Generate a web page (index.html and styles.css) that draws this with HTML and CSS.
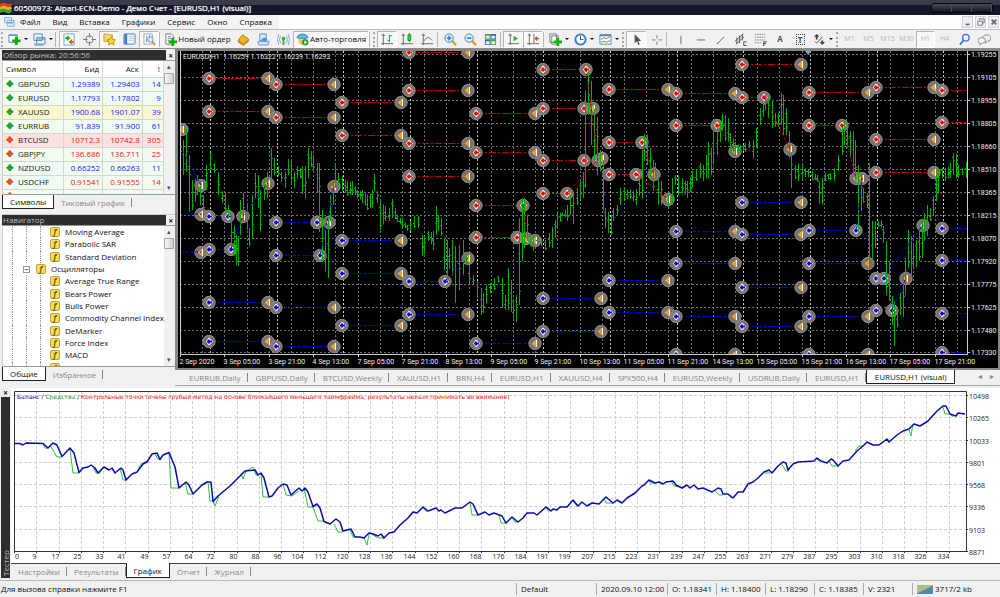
FILE: index.html
```html
<!DOCTYPE html>
<html lang="ru">
<head>
    <meta charset="UTF-8">
    <meta name="viewport" content="width=device-width, initial-scale=1.0">
    <title>60500973: Alpari-ECN-Demo - Демо Счет - [EURUSD,H1 (visual)]</title>
    <link rel="stylesheet" href="styles.css">
</head>
<body>
    <header class="titlebar">
        <svg class="logo" viewBox="0 0 12 12"><path d="M0 4q3-3 6-1t5-1" stroke="#e33d22"/><path d="M0 7q3-3 6-1t5-1" stroke="#e8b21c"/><path d="M0 10q3-3 6-1t5-1" stroke="#35a52f"/></svg>
        <h1>60500973: Alpari-ECN-Demo - Демо Счет - [EURUSD,H1 (visual)]</h1>
        <div class="frame-buttons"><button aria-label="Свернуть"></button><button aria-label="Развернуть"></button><button aria-label="Закрыть"></button></div>
    </header>

    <nav class="menubar">
        <div class="menu">
            <svg class="icon" viewBox="0 0 14 14"><path d="M2 2h8v6H2zM5 5h8v7H5z" fill="#e4f1fc" stroke="#6fa5d8"/><path d="M6 9l2-2 2 2 2-2" fill="none" stroke="#4b8ac9"/></svg>
            <a href="#">Файл</a><a href="#">Вид</a><a href="#">Вставка</a><a href="#">Графики</a><a href="#">Сервис</a><a href="#">Окно</a><a href="#">Справка</a>
        </div>
        <div class="mdi-buttons"><button aria-label="Свернуть окно"><svg viewBox="0 0 10 10"><path d="M2 8h5" /></svg></button><button aria-label="Восстановить окно"><svg viewBox="0 0 10 10"><path class="thin" d="M3 3V1h6v5H7M1 4h6v5H1z"/></svg></button><button aria-label="Закрыть окно"><svg viewBox="0 0 10 10"><path d="M2 2l6 6M8 2L2 8"/></svg></button></div>
    </nav>

    <div class="toolbar">
        <span class="grip"></span>
        <button class="tool drop" aria-label="Новый график"><svg viewBox="0 0 14 14"><path d="M1 2h9v8H1z" fill="#fff" stroke="#4d88b5"/><path d="M1 2.500h9" stroke="#4d88b5"/><path d="M9 4v9M4.500 8.500h9" stroke="#12a512" stroke-width="3"/></svg></button>
        <button class="tool drop" aria-label="Профили"><svg viewBox="0 0 14 14"><path d="M1 1h9v7H1zM4 5h9v7H4z" fill="#e8f3fb" stroke="#4d88b5"/><path d="M4 6.500h9M2 11v2h9" fill="none" stroke="#4d88b5"/></svg></button>
        <span class="sep wide"></span>
        <button class="tool on" aria-label="Обзор рынка"><svg viewBox="0 0 14 14"><path d="M1 1h11v12H1z" fill="#fff" stroke="#6ba2d2"/><path d="M5 3v5M2.500 5.500h5" stroke="#18a818" stroke-width="2"/><path d="M9 7v5M6.500 9.500h5" stroke="#e0532a" stroke-width="2"/></svg></button>
        <button class="tool" aria-label="Окно данных"><svg viewBox="0 0 14 14"><circle cx="7" cy="7" r="4" fill="none" stroke="#777"/><path d="M7 0v5M7 9v5M0 7h5M9 7h5" stroke="#777"/></svg></button>
        <button class="tool on" aria-label="Навигатор"><svg viewBox="0 0 14 14"><path d="M1 3V1h4l1 1h4v7H1z" fill="#f6db74" stroke="#c19a2b"/><path d="M9 4l1.500 3 3 .3-2.200 2.200.6 3.500L9 11.300 6 13l.6-3.500L4.500 7.300l3-.3z" fill="#ffd92e" stroke="#b98b12"/></svg></button>
        <button class="tool" aria-label="Терминал"><svg viewBox="0 0 14 14"><rect x="1" y="1" width="12" height="11" rx="1" fill="#eef6fd" stroke="#3f7fc0"/><path d="M3 1v11" stroke="#3f7fc0" stroke-width="3"/><path d="M6 4h6M6 6h6M6 8h6" stroke="#b8d2e8"/></svg></button>
        <button class="tool on" aria-label="Тестер стратегий"><svg viewBox="0 0 14 14"><path d="M1 1h9v11H1z" fill="#f5fafd" stroke="#8ab0cc"/><path d="M4 3v7M7 2v7" stroke="#6f8fa5"/><circle cx="8" cy="7" r="3" fill="#d7ecfb" fill-opacity=".8" stroke="#5f95bf"/><path d="M10 9l3 4" stroke="#c99a2e" stroke-width="2"/></svg></button>
        <span class="sep"></span>
        <button class="tool order"><svg viewBox="0 0 14 14"><path d="M2 1h6l2 2v9H2z" fill="#fff" stroke="#777"/><path d="M4 4h4M4 6h4M4 8h2" stroke="#888"/><path d="M9.500 5v9M5 9.500h9" stroke="#12a512" stroke-width="3"/></svg>Новый ордер</button>
        <button class="tool" aria-label="MetaEditor"><svg viewBox="0 0 14 14"><path d="M1 8l5-6 7 5-6 5z" fill="#f0b429" stroke="#a87414"/><path d="M1 8v2l6 4 6-5V7l-6 5z" fill="#c48a1c"/></svg></button>
        <button class="tool" aria-label="Сигналы"><svg viewBox="0 0 14 14"><path d="M3 1h7v7H3z" fill="#d7ebfb" stroke="#4a8fd8"/><path d="M5 8q0-3 3-3t3 3z" fill="#4a8fd8"/><path d="M1 9h12l-1 4H2z" fill="#cfe3f5" stroke="#6199cd"/></svg></button>
        <button class="tool" aria-label="Рынок"><svg viewBox="0 0 14 14"><path d="M4 3q-3 4 0 8M10 3q3 4 0 8M2 1q-3 6 0 12M12 1q3 6 0 12" fill="none" stroke="#7fabc4"/><circle cx="7" cy="6" r="2" fill="#3fae46"/><path d="M7 7v6" stroke="#3fae46" stroke-width="2"/></svg></button>
        <button class="tool on auto"><svg viewBox="0 0 14 14"><path d="M1 5q1-4 6-4t6 4q-6 3-12 0z" fill="#6bb5de" stroke="#3384b4"/><path d="M2 6q5 3 9 0l-1 5-4 2-3-2z" fill="#f2ca52"/><circle cx="10" cy="10" r="3.500" fill="#21a637"/><path d="M9 8v4l3-2z" fill="#fff"/></svg>Авто-торговля</button>
        <span class="sep"></span><span class="grip"></span>
        <button class="tool on" aria-label="Бары"><svg viewBox="0 0 14 14"><path d="M2.500 1v12M0 11.500h13M1 3l1.500-2L4 3" fill="none" stroke="#666"/><path d="M9 2v8M7 8h2M9 3h3" stroke="#18932a" fill="none"/></svg></button>
        <button class="tool" aria-label="Свечи"><svg viewBox="0 0 14 14"><path d="M2.500 1v12M0 11.500h13M1 3l1.500-2L4 3" fill="none" stroke="#666"/><path d="M9 0v10" stroke="#18932a"/><path d="M7.500 2h3v6h-3z" fill="#3dd34a" stroke="#18932a"/></svg></button>
        <button class="tool" aria-label="Линия"><svg viewBox="0 0 14 14"><path d="M2.500 1v12M0 11.500h13M1 3l1.500-2L4 3" fill="none" stroke="#666"/><path d="M3 9q4-8 9-1" fill="none" stroke="#2fa34a"/></svg></button>
        <span class="sep"></span>
        <button class="tool" aria-label="Увеличить"><svg viewBox="0 0 14 14"><path d="M8.500 8.500l4.500 4.500" stroke="#d4a72a" stroke-width="2.500"/><circle cx="5.500" cy="5.500" r="4.500" fill="#dff0fc" stroke="#3c85c4"/><path d="M3 5.500h5M5.500 3v5" stroke="#2b6db0" stroke-width="1.500"/></svg></button>
        <button class="tool" aria-label="Уменьшить"><svg viewBox="0 0 14 14"><path d="M8.500 8.500l4.500 4.500" stroke="#d4a72a" stroke-width="2.500"/><circle cx="5.500" cy="5.500" r="4.500" fill="#dff0fc" stroke="#3c85c4"/><path d="M3 5.500h5" stroke="#2b6db0" stroke-width="1.500"/></svg></button>
        <button class="tool" aria-label="Окна мозаикой"><svg viewBox="0 0 14 14"><path d="M1 1h6v6H1zM7 7h6v6H7z" fill="#4aa83a"/><path d="M7 1h6v6H7zM1 7h6v6H1z" fill="#3569b8"/><path d="M2 3h4v3H2zM8 3h4v3H8zM2 9h4v3H2zM8 9h4v3H8z" fill="#e7f1f4"/></svg></button>
        <span class="sep"></span>
        <button class="tool on" aria-label="Автопрокрутка"><svg viewBox="0 0 14 14"><path d="M3.500 1v12M1 11.500h12M2 3l1.500-2L5 3" fill="none" stroke="#666"/><path d="M7 3v6l5-3z" fill="#2fae3f"/></svg></button>
        <button class="tool on" aria-label="Сдвиг графика"><svg viewBox="0 0 14 14"><path d="M2.500 1v12M0 11.500h13M1 3l1.500-2L4 3M7.500 1v10" fill="none" stroke="#666"/><path d="M13 6H9M11 4L9 6l2 2" fill="none" stroke="#c9512a" stroke-width="1.500"/></svg></button>
        <span class="sep"></span>
        <button class="tool drop" aria-label="Индикаторы"><svg viewBox="0 0 14 14"><path d="M1 1h7v9H1zM3 3h7v9H3z" fill="#fff" stroke="#777"/><path d="M9.500 5v9M5 9.500h9" stroke="#12b512" stroke-width="3"/></svg></button>
        <button class="tool drop" aria-label="Периоды"><svg viewBox="0 0 14 14"><circle cx="7" cy="7" r="5.500" fill="#fff" stroke="#2f7cc9" stroke-width="2"/><path d="M7 3v4h3" fill="none" stroke="#444"/></svg></button>
        <button class="tool drop" aria-label="Шаблоны"><svg viewBox="0 0 14 14"><path d="M1 2h12v10H1z" fill="#fff" stroke="#4d88c0"/><path d="M1 2.500h12" stroke="#4d88c0" stroke-width="2"/><path d="M2 7l3-2 3 1 4-2" fill="none" stroke="#c6533b"/><path d="M2 10l3-1 3 1 4-2" fill="none" stroke="#3d9a48"/></svg></button>
        <span class="grip"></span>
        <button class="tool on" aria-label="Курсор"><svg viewBox="0 0 14 14"><path d="M5 1v10l2.500-2 1.500 4 1.500-.7L9 8.500h3z" fill="#555"/></svg></button>
        <button class="tool" aria-label="Перекрестие"><svg viewBox="0 0 14 14"><path d="M7.500 2v4M7.500 9v4M2 7.500h4M9 7.500h4" stroke="#777"/></svg></button>
        <span class="sep wide"></span>
        <button class="tool" aria-label="Вертикальная линия"><svg viewBox="0 0 14 14"><path d="M7.500 3v9" stroke="#666"/></svg></button>
        <button class="tool" aria-label="Горизонтальная линия"><svg viewBox="0 0 14 14"><path d="M3 7.500h9" stroke="#666"/></svg></button>
        <button class="tool" aria-label="Трендовая линия"><svg viewBox="0 0 14 14"><path d="M3 12l8-8" stroke="#666"/></svg></button>
        <button class="tool" aria-label="Канал"><svg viewBox="0 0 14 14"><path d="M1 9l9-8M2 12l9-8M3 5v7M6 3v8M9 1v7" stroke="#555"/><path d="M13.500 9.500h-3v4h3" fill="none" stroke="#444"/></svg></button>
        <button class="tool" aria-label="Фибоначчи"><svg viewBox="0 0 14 14"><path d="M1 1.500h11M1 4.500h11M1 7.500h11M1 10.500h7" stroke="#777" stroke-dasharray="1.500 1"/><path d="M10.500 14V9.500H14M10 11.500h3" fill="none" stroke="#444"/></svg></button>
        <button class="tool letter" aria-label="Текст">A</button>
        <button class="tool letter" aria-label="Метка"><span class="boxed">T</span></button>
        <button class="tool drop arrows" aria-label="Стрелки"><svg viewBox="0 0 14 14"><path d="M1 4l3-3 3 3H5v3H3V4zM7 10l3 3 3-3h-2V8H9v2z" fill="#444"/><path d="M2 9l2 2 6-7" stroke="#555" fill="none"/></svg></button>
        <span class="grip"></span>
        <button class="tool tf">M1</button><button class="tool tf">M5</button><button class="tool tf">M15</button><button class="tool tf">M30</button><button class="tool tf on">H1</button><button class="tool tf">H4</button>
        <button class="tool" aria-label="Поиск"><svg viewBox="0 0 14 14"><circle cx="8.500" cy="5" r="3.500" fill="#eaf3ff" stroke="#3d74d9" stroke-width="1.500"/><path d="M6 8l-4 4.500" stroke="#3d74d9" stroke-width="2"/></svg></button>
        <button class="tool" aria-label="Чат"><svg viewBox="0 0 14 14"><path d="M5 6q0-4 4.500-4T14 5.500 10 9L8 11V9Q5 9 5 6z" fill="#eee" stroke="#888"/><path d="M0 8q0-3 4-3t4 3-4 3l-2 2v-2q-2 0-2-3z" fill="#f7f7f7" stroke="#888"/></svg></button>
    </div>

    <main class="workspace">
        <aside class="side">
            <section class="panel market">
                <div class="caption"><h2>Обзор рынка: 20:56:56</h2><button aria-label="Закрыть">×</button></div>
                <div class="pane">
                    <div class="scroll-area">
                        <table class="quotes">
                            <thead><tr><th>Символ</th><th>Бид</th><th>Аск</th><th>!</th></tr></thead>
                            <tbody>
                                <tr class="up"><td>GBPUSD</td><td>1.29389</td><td>1.29403</td><td>14</td></tr>
                                <tr class="up"><td>EURUSD</td><td>1.17793</td><td>1.17802</td><td>9</td></tr>
                                <tr class="up gold"><td>XAUUSD</td><td>1900.68</td><td>1901.07</td><td>39</td></tr>
                                <tr class="up"><td>EURRUB</td><td>91.839</td><td>91.900</td><td>61</td></tr>
                                <tr class="down rose"><td>BTCUSD</td><td>10712.3</td><td>10742.8</td><td>305</td></tr>
                                <tr class="down"><td>GBPJPY</td><td>136.686</td><td>136.711</td><td>25</td></tr>
                                <tr class="up"><td>NZDUSD</td><td>0.66252</td><td>0.66263</td><td>11</td></tr>
                                <tr class="down"><td>USDCHF</td><td>0.91541</td><td>0.91555</td><td>14</td></tr>
                                <tr class="down"><td>USDJPY</td><td>105.641</td><td>105.645</td><td>4</td></tr>
                            </tbody>
                        </table>
                    </div>
                    <div class="scrollbar"><span>▴</span><i></i><span>▾</span></div>
                </div>
                <div class="tabs"><button class="active">Символы</button><button>Тиковый график</button></div>
            </section>

            <section class="panel navigator">
                <div class="caption"><h2>Навигатор</h2><button aria-label="Закрыть">×</button></div>
                <div class="pane">
                    <div class="scroll-area">
                        <ul class="tree">
                            <li><i></i><i></i><i></i><b>ƒ</b>Moving Average</li>
                            <li><i></i><i></i><i></i><b>ƒ</b>Parabolic SAR</li>
                            <li><i></i><i></i><i></i><b>ƒ</b>Standard Deviation</li>
                            <li class="branch"><i></i><button aria-label="Свернуть ветку">−</button><b>ƒ</b>Осцилляторы</li>
                            <li><i></i><i></i><i></i><b>ƒ</b>Average True Range</li>
                            <li><i></i><i></i><i></i><b>ƒ</b>Bears Power</li>
                            <li><i></i><i></i><i></i><b>ƒ</b>Bulls Power</li>
                            <li><i></i><i></i><i></i><b>ƒ</b>Commodity Channel Index</li>
                            <li><i></i><i></i><i></i><b>ƒ</b>DeMarker</li>
                            <li><i></i><i></i><i></i><b>ƒ</b>Force Index</li>
                            <li><i></i><i></i><i></i><b>ƒ</b>MACD</li>
                            <li><i></i><i></i><i></i><b>ƒ</b>Momentum</li>
                        </ul>
                    </div>
                    <div class="scrollbar"><span>▴</span><i></i><span>▾</span></div>
                </div>
                <div class="tabs"><button class="active">Общие</button><button>Избранное</button></div>
            </section>
        </aside>

        <section class="chart-column">
            <div class="chart-frame"><svg id="price-chart" class="chart" viewBox="178 51 820 317" preserveAspectRatio="xMinYMin meet"></svg></div>
            <div class="tabs chart-tabs">
                <button>EURRUB,Daily</button><button>GBPUSD,Daily</button><button>BTCUSD,Weekly</button><button>XAUUSD,H1</button><button>BRN,H4</button><button>EURUSD,H1</button><button>XAUUSD,H4</button><button>SPX500,H4</button><button>EURUSD,Weekly</button><button>USDRUB,Daily</button><button>EURUSD,H1</button><button class="active">EURUSD,H1 (visual)</button>
                <span class="tab-scroll"><span>◂</span><span>▸</span></span>
            </div>
        </section>
    </main>

    <section class="tester">
        <div class="tester-caption"><button aria-label="Закрыть">×</button><h2>Тестер</h2></div>
        <div class="tester-body">
            <div class="result"><svg id="balance-chart" class="chart" viewBox="11 388 989 175" preserveAspectRatio="xMinYMin meet"></svg></div>
            <div class="tabs"><button>Настройки</button><button>Результаты</button><button class="active">График</button><button>Отчет</button><button>Журнал</button></div>
        </div>
    </section>

    <footer class="statusbar">
        <span class="help">Для вызова справки нажмите F1</span>
        <span class="profile">Default</span>
        <span class="date">2020.09.10 12:00</span>
        <span>O: 1.18341</span><span>H: 1.18400</span><span>L: 1.18290</span><span>C: 1.18385</span><span>V: 2321</span>
        <span class="traffic"><svg viewBox="0 0 16 10"><path d="M1 9V1M3 8V1M5 7V1M7 6V1M9 5V1M11 4V1M13 3V1M15 2V1" stroke="#6d8b1e"/><path d="M1 10V9M3 10V8M5 10V7M7 10V6M9 10V5M11 10V4M13 10V3M15 10V2" stroke="#1f6a8c" stroke-width="1.500"/></svg>3717/2 kb</span>
    </footer>

    <script src="charts.js"></script>
</body>
</html>
```
FILE: styles.css
```css
* { box-sizing: border-box; }
body {
    margin: 0;
    height: 100vh;
    display: grid;
    grid-template-columns: minmax(0, 1fr);
    grid-template-rows: 15px 14px 20px minmax(0, 337fr) minmax(0, 195fr) 16px;
    overflow: hidden;
    background: #f0f0f0;
    color: #111;
    font: 8px/12px "Open Sans", "Noto Sans", sans-serif;
}
h1, h2 { margin: 0; font: inherit; }
button { margin: 0; padding: 0; border: 0; background: none; color: inherit; font: inherit; white-space: nowrap; }
a { color: inherit; text-decoration: none; }
svg { display: block; }

/* window title and menu */
.titlebar {
    display: flex;
    align-items: center;
    background: linear-gradient(#3b3b49 5px, #14162a 5px);
    color: #fff;
}
.titlebar h1 { flex: 1; padding-left: 2px; text-shadow: 0 0 1px #fff; }
.logo { width: 12px; height: 12px; fill: none; stroke-width: 3; }
.frame-buttons { display: flex; margin-right: 7px; border: 1px solid #05060e; border-radius: 3px; background: linear-gradient(#4a4b5a, #11131f); }
.frame-buttons button { width: 20px; height: 8px; border-right: 1px solid #4a4b5a; }
.menubar { display: flex; justify-content: space-between; background: #fff; }
.menu { display: flex; align-items: center; gap: 12px; padding: 0 7px 0 3px; background: #f3f3f3; }
.menu .icon { width: 12px; height: 12px; margin-right: -7px; }
.mdi-buttons { display: flex; gap: 2px; align-items: center; padding-right: 1px; }
.mdi-buttons button { width: 11px; height: 12px; padding: 1px; border: 1px solid #ccd2da; background: #eef0f3; }
.mdi-buttons svg { width: 8px; height: 8px; fill: none; stroke: #666; stroke-width: 2; }
.mdi-buttons .thin { stroke-width: 1; }

/* toolbar */
.toolbar { display: flex; align-items: center; border-top: 1px solid #b9b9b9; border-bottom: 1px solid #8c8c8c; background: #f1f1f1; overflow: hidden; }
.tool { display: flex; align-items: center; justify-content: center; flex: none; width: 20px; height: 17px; }
.tool svg { width: 13px; height: 13px; flex: none; }
.tool.on { border: 1px solid #b4b4b4; border-right-color: #fff; border-bottom-color: #fff; background: #f8f8f8; }
.tool.drop { width: 25px; gap: 3px; }
.tool.drop::after { content: ""; border: 2px solid transparent; border-top: 2px solid #111; margin-top: 2px; }
.tool.order { width: 71px; gap: 1px; }
.tool.auto { width: 76px; gap: 1px; }
.tool.letter { color: #555; font-weight: bold; }
.tool.tf { width: 19px; color: #b3b3b3; font-size: 7px; }
.boxed { width: 9px; border: 1px dotted #444; line-height: 9px; }
.sep { flex: none; width: 3px; height: 15px; border-left: 1px solid #b5b5b5; }
.sep.wide { width: 4px; }
.grip { flex: none; width: 3px; height: 15px; margin: 0 1px; border-left: 2px dotted #aaa; }

/* left panels */
.workspace { display: grid; grid-template-columns: 175px minmax(0, 1fr); grid-template-rows: minmax(0, 1fr); }
.side { display: grid; grid-template-rows: minmax(0, 164fr) minmax(0, 172fr); padding: 1px 1px 0 2px; }
.panel { display: flex; flex-direction: column; min-height: 0; }
.market { padding-bottom: 4px; }
.navigator { padding-bottom: 4px; border-top: 1px solid #ccc; }
.caption { display: flex; flex: none; height: 10px; line-height: 9px; }
.caption h2 { flex: 1; padding-left: 1px; background: #2e2e2e; color: #bdbdbd; }
.caption button { width: 10px; font-weight: bold; }
.pane { display: flex; flex: 1; min-height: 0; border: 1px solid #999; border-left-color: #ccc; background: #fff; }
.scroll-area { flex: 1; min-width: 0; overflow: hidden; }
.scrollbar { display: flex; flex-direction: column; align-items: center; width: 11px; background: #f0f0f0; color: #555; font-size: 7px; }
.scrollbar i { width: 10px; height: 11px; flex: none; border: 1px solid #a5a5a5; border-radius: 1px; background: linear-gradient(90deg, #f7f7f7, #cfcfcf); }
.scrollbar span:last-child { margin-top: auto; }
.quotes { width: 100%; border-collapse: collapse; table-layout: fixed; }
.quotes th { height: 16px; padding: 0 3px; border-right: 1px solid #ddd; font-weight: normal; text-align: right; }
.quotes th:first-child { width: 60px; text-align: left; }
.quotes th:nth-child(4) { width: 21px; }
.quotes td { height: 14px; padding: 0 2px; border: 1px solid #d5d5d5; border-left: 0; background: #effcef; text-align: right; line-height: 12px; }
.quotes td:first-child { text-align: left; color: #222; }
.quotes td:first-child::before { content: "✥"; display: inline-block; width: 12px; padding-left: 1px; font-size: 9px; font-weight: bold; }
.up { color: #1a1aff; }
.down { color: #f31616; }
.up td:first-child::before { color: #109a2a; }
.down td:first-child::before { color: #d94a1c; }
.gold td { background: #f9f8cf; }
.rose td { background: #ffe0df; }

/* navigator tree */
.tree { display: flex; flex-direction: column; height: calc(100% + 8px); margin: 0; padding: 0; list-style: none; }
.tree li { display: flex; align-items: center; flex: 1; min-height: 0; white-space: nowrap; }
.tree i { align-self: stretch; flex: none; width: 14px; border-right: 1px dotted #999; }
.tree i:first-child { width: 10px; }
.tree b { flex: none; width: 10px; height: 10px; margin-right: 5px; border: 1px solid #c3a031; border-radius: 2px; background: #f8dc5d; color: #755800; line-height: 8px; text-align: center; font-style: italic; }
.tree i + b { margin-left: 9px; }
.tree button { width: 7px; height: 7px; margin: 0 6px 0 10px; border: 1px solid #999; background: #fff; line-height: 4px; }

/* tab strips */
.tabs { display: flex; flex: none; height: 15px; color: #888; }
.tabs button { position: relative; padding: 0 7px; line-height: 13px; }
.tabs button:not(.active)::after { content: ""; position: absolute; right: 0; top: 3px; height: 9px; border-right: 1px solid #888; }
.tabs .active { height: 14px; border: 1px solid #222; border-top: 0; background: #fff; color: #111; }

/* price chart */
.chart-column { display: flex; flex-direction: column; min-height: 0; }
.chart-frame { flex: 1; min-height: 0; border: solid #858885; border-width: 2px 2px 2px 3px; background: #000; }
.chart { width: 100%; height: 100%; }
.chart-tabs { height: 16px; padding-left: 6px; border-bottom: 1px solid #aaa; }
.chart-tabs button { padding: 0 7px 0 8px; line-height: 14px; }
.tab-scroll { display: flex; gap: 8px; margin-left: auto; padding-right: 6px; }
.grid { fill: none; stroke: #66727e; stroke-dasharray: 2 2; }
.day { fill: none; stroke: #ccc; stroke-dasharray: 2 2; }
.frame { fill: none; stroke: #ccc; }
.axis-text { fill: #eee; font-family: Roboto, sans-serif; font-size: 7px; }
.bars { fill: none; stroke: #00b000; }
.sell { fill: none; stroke: #c40000; stroke-dasharray: 7 2 2 2; }
.buy { fill: none; stroke: #0000d6; stroke-dasharray: 7 2 2 2; }
.link { stroke-dasharray: 3 2; }
.halo { fill: #8d7c70; fill-opacity: 0.9; stroke: #8a8d95; }
.mark-back { fill: #fff; }
.mark-sell { fill: #f00; }
.mark-buy { fill: #00f; }
.mark-close { fill: #e6a11c; }

/* tester */
.tester { display: grid; grid-template-columns: 11px minmax(0, 1fr); grid-template-rows: minmax(0, 1fr); padding: 2px 0; border-bottom: 1px solid #bbb; }
.tester-caption { display: flex; flex-direction: column; padding: 0 1px; }
.tester-caption button { height: 9px; line-height: 8px; font-weight: bold; }
.tester-caption h2 { flex: 1; background: #2e2e2e; color: #bbb; writing-mode: vertical-rl; transform: rotate(180deg); line-height: 9px; padding-top: 2px; }
.tester-body { display: flex; flex-direction: column; min-height: 0; }
.result { flex: 1; min-height: 0; background: #fff; }
.result + .tabs { border-top: 1px solid #444; }
.tester-body .active { margin-top: -1px; height: 15px; }
.light-grid { fill: none; stroke: #cfcfcf; stroke-dasharray: 3 2; }
.dark-frame { fill: none; stroke: #333; }
.dark-text { fill: #222; font-size: 7px; }
.legend { font-family: "DejaVu Sans", sans-serif; font-size: 6px; }
.balance { fill: none; stroke: #0c0ca8; stroke-width: 1.5; stroke-linejoin: round; }
.equity { fill: none; stroke: #2fc13a; }
.blue-text { fill: #0c0ca8; }
.green-text { fill: #13a82a; }
.red-text { fill: #f11; }

/* status bar */
.statusbar { display: flex; align-items: center; overflow: hidden; white-space: nowrap; }
.statusbar span { width: 49px; padding-left: 4px; border-left: 1px solid #aaa; }
.statusbar .help { flex: 1; padding-left: 1px; border: 0; }
.statusbar .profile { width: 80px; }
.statusbar .date { width: 71px; }
.statusbar .traffic { display: flex; align-items: center; gap: 2px; width: 88px; }
.traffic svg { width: 16px; height: 10px; }
```
FILE: charts.js
```js
// x, high, low of each bar
const bars = `180,131,155 183,140,175 186,130,172 189,155,212 192,180,210 197,175,195 203,195,218 206,165,190 210,153,171 214,163,173
218,172,195 222,191,203 225,192,211 228,205,218 231,215,248 236,235,265 238,236,266 240,200,235 243,193,220 247,203,230 249,228,246
252,195,238 255,173,198 258,175,208 260,190,231 264,178,200 267,172,198 271,148,178 274,158,175 278,166,176 281,172,182 285,172,188
288,159,175 291,160,185 294,172,188 297,166,178 300,168,178 302,166,194 305,166,198 308,148,178 311,151,167 313,157,172 317,163,192
319,163,232 322,210,262 325,230,271 328,220,278 330,195,221 333,180,205 335,163,188 338,173,185 342,176,191 347,181,196 352,181,195
357,190,198 362,190,203 367,195,210 372,190,208 374,174,191 377,191,203 380,201,230 385,206,221 389,208,221 392,199,218 397,215,222
402,218,228 407,225,231 410,221,231 414,216,228 418,216,228 422,235,256 424,236,254 428,231,241 433,231,250 436,206,235 438,215,231
441,218,236 444,238,270 447,240,278 449,248,269 452,240,275 455,246,303 459,245,290 463,240,275 466,256,265 469,265,285 473,275,285
477,281,298 481,288,315 483,293,313 486,285,303 490,283,293 494,278,290 498,276,283 502,278,308 505,295,310 508,268,310 511,280,312
513,300,320 516,295,322 519,218,305 522,198,261 524,198,248 527,215,241 530,233,246 533,235,251 537,235,247 541,239,246 545,240,250
549,233,247 552,227,248 557,211,229 562,212,216 567,205,221 570,195,215 573,193,224 577,188,205 580,181,199 583,172,198 585,90,188
588,73,115 591,81,145 594,109,160 597,117,175 600,150,171 603,160,211 605,208,228 608,212,233 611,215,235 613,208,221 617,205,215
620,188,205 624,188,201 630,190,199 636,189,205 639,180,196 642,150,198 644,134,161 647,135,165 650,148,178 653,160,191 655,163,181
658,178,205 661,181,205 665,195,206 668,195,208 672,178,205 675,175,185 678,175,195 682,178,193 687,181,198 692,171,188 696,170,181
700,163,178 703,165,181 708,142,178 711,148,175 713,128,165 717,125,155 722,113,131 725,115,141 728,118,142 730,133,151 735,142,156
740,145,152 745,143,152 749,141,148 753,140,158 756,128,148 760,108,125 765,95,110 768,98,118 772,101,128 775,113,127 778,113,127
781,93,125 783,95,135 786,108,135 789,131,158 791,152,188 795,165,179 798,164,181 802,164,179 808,170,177 812,171,180 817,175,182
819,181,204 822,178,204 825,173,181 830,173,180 834,168,181 838,155,171 842,128,155 844,121,145 847,128,148 850,131,158 853,131,175
855,140,180 858,165,231 861,175,211 863,188,203 867,193,208 869,163,268 872,221,261 875,221,248 878,221,227 881,220,228 883,226,243
886,241,295 889,261,301 892,296,325 894,301,346 897,308,327 900,293,315 903,275,317 905,258,295 908,230,268 911,236,277 913,243,268
916,240,267 919,228,261 922,221,258 924,213,241 927,205,236 930,208,221 933,196,216 936,175,201 938,168,194 942,168,178 945,168,181
950,163,178 953,153,175 956,154,178 958,165,178 962,168,175 966,162,178`.split(/\s+/).map(p => p.split(',').map(Number));

// order levels: side, end mark (y = closed, s = same as side, n = none), x1, x2, y
const levels = `r,y,209,268,78 r,y,209,268,111 r,y,276,334,84 r,y,276,334,117 r,y,342,401,102 r,y,342,401,135 r,y,409,468,52 r,y,409,468,90
r,y,409,468,143 r,y,409,468,176 b,s,209,228,216 b,s,209,231,249 b,s,276,317,222 b,s,276,320,255 b,y,342,401,240 b,y,342,401,273
b,y,209,268,302 b,y,209,268,341 b,y,276,334,307 b,y,276,334,346 b,y,342,401,325 b,s,409,445,281 b,y,409,468,314
r,y,476,535,113 r,y,476,535,152 r,s,476,523,205 r,s,476,517,237 b,y,476,535,343 r,s,543,586,69 r,s,543,584,108 r,s,543,584,160
r,s,543,567,193 b,y,543,601,298 b,y,543,601,331 r,y,609,668,89 r,s,609,642,142 r,s,609,636,174 b,y,609,668,280 b,y,609,668,312
r,y,676,735,93 r,s,676,717,125 b,y,676,735,231 b,y,676,735,263 b,y,676,735,316 b,y,676,735,354 r,y,742,801,64 r,s,742,764,97
b,y,742,801,202 b,y,742,801,234 b,y,742,801,287 b,y,742,801,326 r,y,809,868,92 r,s,809,842,125 b,s,809,856,230 b,y,809,868,263
b,y,809,868,316 b,y,809,868,354 r,y,876,934,87 r,y,876,934,139 r,y,876,934,172 b,s,876,884,278 b,s,876,892,310
r,n,942,967,90 r,n,942,967,122 b,n,942,967,228 b,n,942,967,260 b,n,942,967,313 b,n,942,967,352`.split(/\s+/).map(p => p.split(','));

const closes = [[182,129],[201,185],[268,183],[334,186],[201,214],[201,252],[243,216],[329,222],[468,258],[526,238],[535,240],[593,108],[598,160],[602,158],[654,174],[668,199],[735,151],[790,149],[856,178],[862,178],[906,278],[923,225]];
const sellLinks = 'M523 205L526 238M586 69L598 160M567 193L598 160M642 142L654 174M636 174L668 199M717 125L735 151M764 97L790 149M842 125L856 178';
const buyLinks = 'M181 147L201 185M231 249L243 216L268 183M320 255L334 186M445 281L468 258M856 230L862 178M884 278L923 225M892 310L906 278M180 214H201M180 252H201';
const prices = ['1.19255', '1.19105', '1.18955', '1.18805', '1.18660', '1.18510', '1.18365', '1.18215', '1.18070', '1.17920', '1.17775', '1.17625', '1.17480', '1.17330'];
const times = ['2 Sep 2020', '3 Sep 05:00', '3 Sep 21:00', '4 Sep 13:00', '7 Sep 05:00', '7 Sep 21:00', '8 Sep 13:00', '9 Sep 05:00', '9 Sep 21:00', '10 Sep 13:00', '11 Sep 05:00', '11 Sep 21:00', '14 Sep 13:00', '15 Sep 05:00', '15 Sep 21:00', '16 Sep 13:00', '17 Sep 05:00', '17 Sep 21:00'];

function mark(kind, x, y) {
    let s = `<circle class="halo" cx="${x}" cy="${y}" r="6.2"/>`;
    if (kind === 'y') {
        return s + `<path class="mark-back" d="M${x + 2} ${y - 4}v8l-5-4z"/><path class="mark-close" d="M${x + 1} ${y - 3}v6l-4-3z"/>`;
    }
    s += `<path class="mark-back" d="M${x - 3} ${y}l3-4 4 4-4 4z"/>`;
    return s + `<path class="${kind === 'r' ? 'mark-sell' : 'mark-buy'}" d="M${x - 2} ${y - 1}h1v-1h2v1h2v2h-2v1h-2v-1h-1z"/>`;
}

function drawPrice() {
    let out = '<defs><clipPath id="plot"><path d="M180 51H967V354H180z"/></clipPath></defs><g clip-path="url(#plot)">';
    let grid = '', day = '', ticks = '', labels = '';
    prices.forEach((p, i) => {
        const y = Math.round(54 + i * 22.96) + 0.5;
        grid += `M180 ${y}H967`;
        ticks += `M967 ${y}h3`;
        labels += `<text x="971" y="${y + 2.5}">${p}</text>`;
    });
    for (let i = 0; i < 36; i++) grid += `M${Math.round(180 + i * 22.2) + 0.5} 51V354`;
    for (let i = 0; i < 12; i++) day += `M${Math.round(210 + i * 66.65) + 0.5} 51V354`;
    times.forEach((t, i) => {
        const x = Math.round(180 + i * 44.4) + 0.5;
        ticks += `M${x} 354v3`;
        labels += `<text x="${x - 1}" y="364">${t}</text>`;
    });
    out += `<path class="grid" d="${grid}"/><path class="day" d="${day}"/>`;

    let d = '';
    const bar = (x, h, l, k) => {
        const o = Math.round(h + (l - h) * (k % 3 + 1) / 5), c = Math.round(l - (l - h) * (k % 4 + 1) / 6);
        d += `M${x + 0.5} ${h}V${l}M${x - 1} ${o + 0.5}h2M${x} ${c + 0.5}h2`;
    };
    levels.forEach(l => { out += `<path class="${l[0] === 'r' ? 'sell' : 'buy'}" d="M${l[2]} ${+l[4] + 0.5}H${l[3]}"/>`; });
    levels.forEach(([side, end, x1, x2, y]) => {
        out += mark(side, +x1, +y + 0.5);
        if (end !== 'n') out += mark(end === 'y' ? 'y' : side, +x2, +y + 0.5);
    });
    closes.forEach(c => { out += mark('y', c[0], c[1] + 0.5); });
    bars.forEach(([x, h, l], i) => {
        bar(x, h, l, i);
        const next = bars[i + 1];
        // missing bar between two far ones
        if (next && next[0] - x > 4) bar(Math.round((x + next[0]) / 2), (h + next[1]) / 2 + 1, (l + next[2]) / 2 - 1, i + 1);
    });
    out += `<path class="bars" d="${d}"/><path class="sell link" d="${sellLinks}"/><path class="buy link" d="${buyLinks}"/>`;
    out += '<path d="M805 51h6l-3 4z" fill="#8aa4b8"/></g>';
    out += `<path class="frame" d="M180.5 51V354.5H967.5V51${ticks}"/><g class="axis-text">${labels}<text x="183" y="59">EURUSD|H1&#160; 1.16259 1.16322 1.16239 1.16293</text></g>`;
    document.getElementById('price-chart').innerHTML = out;
}

const balance = `14,443.5 20,443.5 23,445 26,443 43,443.5 48,448 53,443 57,445 62,456.5 70,448 74,453 79,472.5 83,468 88,467 91,465 95,468 98,473 104,467 109,470 112,468 115,473 121,468 123,470 126,480 132,474 137,472 143,464 147,462 152,454 157,453 160,459.5 163,455 169,452.5 175,467 179,488 186,482 189,485 193,494 202,485 207,482 211,482 213,501.5 218,496 230,486 237,479 245,471 255,470 258,475 261,473 264,478 269,497 272,496 278,488 283,484 287,485 291,495 299,488 302,491 305,488 308,492 313,506.5 317,504 320,508 324,521.5 330,524 336,519 340,522 343,531 351,529 355,537 360,537 364,538 369,533 373,534 378,536 381,534 384,538 389,533 394,532 400,525 408,518 413,512 417,513 423,507 428,511 436,508 439,511 441,510 445,513 455,508 462,508 470,502 473,504 478,515 485,512 489,515 494,513 502,516 506,523 512,517 518,522 523,518 527,513 534,513 537,515 546,507 551,511 553,509 557,510 560,507 567,507 573,500 578,506 582,502 587,506 592,503 599,504 606,497 613,503 617,500 622,503 627,498 635,493 642,486 644,485 649,480 655,483 659,482 663,484 666,482 673,481 676,485 682,488 687,485 690,488 694,485 698,489 703,488 712,492 718,488 721,489 723,494 728,494 733,498 738,492 743,492 748,484 753,482 758,478 764,472 769,470 772,473 778,466 783,462 786,463 788,470 793,464 798,462 814,461 817,458 821,461 827,463 831,459 833,460 838,466 843,461 849,460 857,451 863,446 867,442 873,445 879,445 887,439 889,442 897,435 903,431 909,429 914,424 920,426 928,421 937,411 943,406 946,406 950,414 956,416 958,413 965,414`;

// drawdowns where equity leaves the balance line
const equity = ['43,444 45,448 48,448', '50,445 57,457 62,457', '70,449 73,473 79,473 83,467', '93,466 96,473 100,473 103,467', '120,468 123,480 127,480', '138,470 141,464 147,461', '155,454 158,459 160,459', '169,453 171,488 179,488', '185,482 188,494 193,494', '208,482 210,501 213,501 215,506 219,496', '241,473 243,479 246,471 253,467 256,475 258,475', '261,474 263,497 269,497', '283,484 286,495 292,496 299,491', '304,488 308,507 313,507 318,521 324,521', '334,524 338,532 343,532', '350,530 353,537 355,537', '364,538 367,545 369,534', '373,535 378,538 384,538', '423,508 427,512', '470,502 472,515 478,515', '499,515 501,523 507,523', '512,518 515,522 518,522', '546,508 549,512', '573,501 577,506', '604,498 606,503 613,503', '649,481 650,483 655,483', '671,481 674,486 680,487', '715,491 719,495 723,495', '728,494 731,498', '765,473 770,473', '781,463 786,471 789,471', '817,459 820,462', '829,461 832,466 838,466', '855,451 859,446 863,446', '909,430 911,436 913,424', '943,407 945,414 950,414 953,417'];
const trades = [0, 9, 17, 25, 33, 41, 49, 57, 64, 72, 80, 88, 96, 104, 112, 120, 128, 136, 144, 152, 160, 168, 176, 184, 191, 199, 207, 215, 223, 231, 239, 247, 255, 263, 271, 279, 287, 295, 303, 310, 318, 326, 334];
const money = [10498, 10265, 10033, 9801, 9568, 9336, 9103, 8871];

function drawBalance() {
    let grid = '', ticks = '', labels = '';
    trades.forEach((t, i) => {
        const x = Math.round(14 + i * 22.25) + 0.5;
        if (i) grid += `M${x} 391V551`;
        ticks += `M${x} 551v2`;
        labels += `<text x="${i ? x : 15}" y="559" text-anchor="${i ? 'end' : 'start'}">${t}</text>`;
    });
    money.forEach((m, i) => {
        const y = Math.round(395 + i * 22.25) + 0.5;
        if (i < 7) grid += `M14 ${y}H966`;
        ticks += `M966 ${y}h2`;
        labels += `<text x="969" y="${y + 3}">${m}</text>`;
    });
    document.getElementById('balance-chart').innerHTML =
        `<path class="light-grid" d="${grid}"/><path class="dark-frame" d="M14.500 391.500H966.500V551.500H14.500z${ticks}"/>` +
        equity.map(e => `<polyline class="equity" points="${e}"/>`).join('') +
        `<polyline class="balance" points="${balance}"/><g class="dark-text">${labels}</g>` +
        '<text class="legend" x="17" y="399"><tspan class="blue-text">Баланс</tspan> / <tspan class="green-text">Средства</tspan> / <tspan class="red-text">Контрольные точки (очень грубый метод на основе ближайшего меньшего таймфрейма, результаты нельзя принимать во внимание)</tspan></text>';
}

drawPrice();
drawBalance();
```
